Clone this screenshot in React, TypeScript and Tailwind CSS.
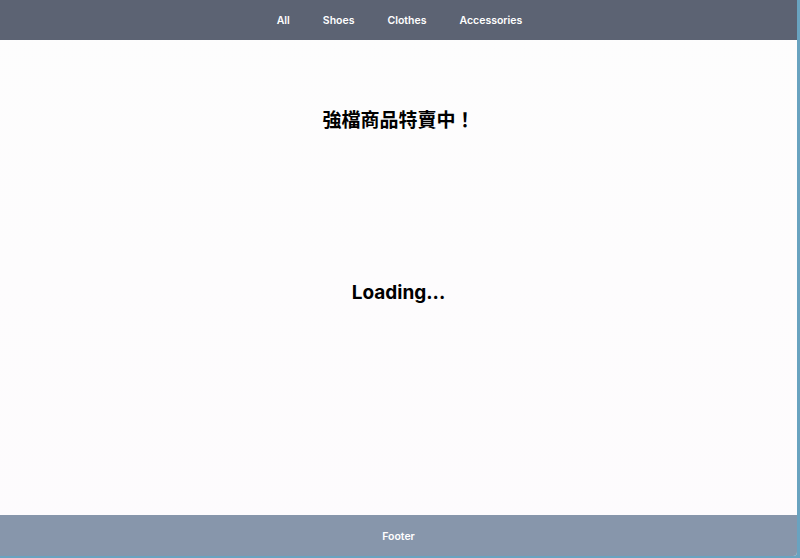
export default function App() {
  const links = ["All", "Shoes", "Clothes", "Accessories"];
  return (
    <div className="h-[558px] w-[800px] bg-[#69a3c0] font-['Inter','Noto_Sans_CJK_TC',sans-serif]">
      <div className="flex h-[556px] w-[797px] flex-col overflow-hidden rounded-br-[4px] bg-gradient-to-b from-[#fdfdfd] to-[#fdfbfd]">
        <header className="flex h-10 items-center justify-center gap-[33px] bg-[#5c6373] pt-[2px] pl-[2px]">
          {links.map((l) => (
            <a key={l} className="text-[10.5px] font-semibold text-white">
              {l}
            </a>
          ))}
        </header>
        <main className="flex flex-1 flex-col items-center">
          <h1 className="mt-[67px] text-[19px] leading-7 font-bold text-black">強檔商品特賣中！</h1>
          <p className="mt-[144px] text-[19px] leading-7 font-bold text-black">Loading...</p>
        </main>
        <footer className="flex h-[41px] items-center justify-center bg-[#8796ab] pt-[2px]">
          <span className="text-[10.5px] font-semibold text-white">Footer</span>
        </footer>
      </div>
    </div>
  );
}
